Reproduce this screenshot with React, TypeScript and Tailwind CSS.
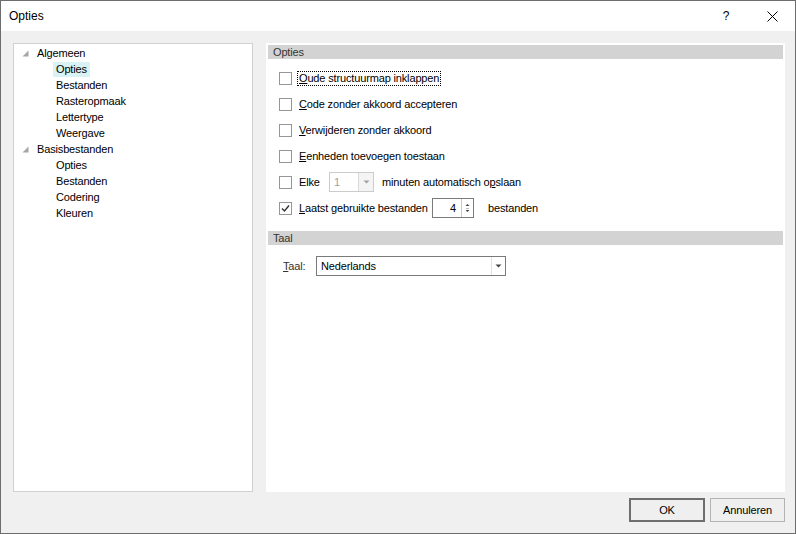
import React from "react";

function Tri() {
  return (
    <svg width="7" height="7" viewBox="0 0 7 7" className="shrink-0">
      <polygon points="6.5,0.5 6.5,6.5 0.5,6.5" fill="#a6a6a6" />
    </svg>
  );
}

function Check({ checked }: { checked?: boolean }) {
  return (
    <div className="w-[13px] h-[13px] border border-[#969696] bg-white shrink-0 flex items-center justify-center">
      {checked && (
        <svg width="9" height="9" viewBox="0 0 9 9">
          <polyline points="1,4.5 3.5,7 8,1.5" fill="none" stroke="#333" strokeWidth="1.4" />
        </svg>
      )}
    </div>
  );
}

function DownArrow({ color = "#444" }: { color?: string }) {
  return (
    <svg width="7" height="4" viewBox="0 0 7 4">
      <polygon points="0.5,0.5 6.5,0.5 3.5,3.5" fill={color} />
    </svg>
  );
}

export default function App() {
  const parentRow = "h-[16px] flex items-center pl-[8px]";
  const childRow = "h-[16px] flex items-center pl-[39px]";
  return (
    <div className="w-[796px] h-[534px] border border-[#6d6d6d] bg-[#f0f0f0] flex flex-col font-['Liberation_Sans',Arial,sans-serif] text-[11px] tracking-[-0.15px] text-black leading-none">
      {/* Title bar */}
      <div className="h-[30px] bg-white flex items-center shrink-0">
        <div className="pl-[8px] text-[12px] tracking-normal flex-1">Opties</div>
        <div className="w-[46px] h-[30px] flex items-center justify-center text-[12px]">?</div>
        <div className="w-[46px] h-[30px] flex items-center justify-center">
          <svg width="11" height="11" viewBox="0 0 11 11">
            <line x1="0.5" y1="0.5" x2="10.5" y2="10.5" stroke="#000" strokeWidth="1" />
            <line x1="10.5" y1="0.5" x2="0.5" y2="10.5" stroke="#000" strokeWidth="1" />
          </svg>
        </div>
      </div>

      {/* Body */}
      <div className="flex pt-[12px] pl-[12px] pr-[10px] gap-[13px] h-[461px] shrink-0">
        {/* Tree */}
        <div className="w-[240px] h-[449px] border border-[#d0d0d0] bg-white pt-[1px]">
          <div className={parentRow}>
            <Tri />
            <span className="ml-[8px]">Algemeen</span>
          </div>
          <div className={childRow}>
            <span className="px-[3px] h-[15px] flex items-center bg-[#d9f2f3]">Opties</span>
          </div>
          <div className={childRow}><span className="px-[3px]">Bestanden</span></div>
          <div className={childRow}><span className="px-[3px]">Rasteropmaak</span></div>
          <div className={childRow}><span className="px-[3px]">Lettertype</span></div>
          <div className={childRow}><span className="px-[3px]">Weergave</span></div>
          <div className={parentRow}>
            <Tri />
            <span className="ml-[8px]">Basisbestanden</span>
          </div>
          <div className={childRow}><span className="px-[3px]">Opties</span></div>
          <div className={childRow}><span className="px-[3px]">Bestanden</span></div>
          <div className={childRow}><span className="px-[3px]">Codering</span></div>
          <div className={childRow}><span className="px-[3px]">Kleuren</span></div>
        </div>

        {/* Right panel */}
        <div className="flex-1 h-[449px] bg-white pt-[2px] px-[2px]">
          <div className="h-[14px] bg-[#d3d3d3] pl-[5px] flex items-center text-[#333]">Opties</div>
          <div className="mt-[6px] pl-[11px]">
            <div className="h-[26px] flex items-center">
              <Check />
              <span className="ml-[5px] border border-dotted border-black px-[1px] h-[15px] flex items-center">
                <span><u>O</u>ude structuurmap inklappen</span>
              </span>
            </div>
            <div className="h-[26px] flex items-center">
              <Check />
              <span className="ml-[7px]"><u>C</u>ode zonder akkoord accepteren</span>
            </div>
            <div className="h-[26px] flex items-center">
              <Check />
              <span className="ml-[7px]"><u>V</u>erwijderen zonder akkoord</span>
            </div>
            <div className="h-[26px] flex items-center">
              <Check />
              <span className="ml-[7px]"><u>E</u>enheden toevoegen toestaan</span>
            </div>
            <div className="h-[26px] flex items-center">
              <Check />
              <span className="ml-[7px] w-[30px]">Elke</span>
              <div className="w-[45px] h-[20px] border border-[#cccccc] bg-white flex items-stretch">
                <div className="flex-1 pl-[4px] flex items-center text-[#a0a0a0]">1</div>
                <div className="w-[15px] border-l border-[#d9d9d9] bg-[#f4f4f4] flex items-center justify-center">
                  <DownArrow color="#a0a0a0" />
                </div>
              </div>
              <span className="ml-[8px]">minuten automatisch o<u>p</u>slaan</span>
            </div>
            <div className="h-[26px] flex items-center">
              <Check checked />
              <span className="ml-[7px] w-[133px]"><u>L</u>aatst gebruikte bestanden</span>
              <div className="w-[42px] h-[20px] border border-[#7a7a7a] bg-white flex items-stretch">
                <div className="flex-1 pr-[5px] flex items-center justify-end">4</div>
                <div className="w-[12px] border-l border-[#c8c8c8] flex flex-col items-center justify-center">
                  <svg width="7" height="14" viewBox="0 0 7 14">
                    <polygon points="3.5,3 5.5,5 1.5,5" fill="#444" />
                    <line x1="2" y1="7.5" x2="5" y2="7.5" stroke="#bbb" strokeWidth="1" />
                    <polygon points="1.5,9 5.5,9 3.5,11" fill="#444" />
                  </svg>
                </div>
              </div>
              <span className="ml-[14px]">bestanden</span>
            </div>
          </div>

          <div className="mt-[10px] h-[14px] bg-[#d3d3d3] pl-[5px] flex items-center text-[#333]">Taal</div>
          <div className="mt-[11px] h-[20px] flex items-center pl-[15px]">
            <span className="w-[33px] text-[#333]"><u>T</u>aal:</span>
            <div className="w-[190px] h-[20px] border border-[#7a7a7a] bg-white flex items-stretch">
              <div className="flex-1 pl-[4px] flex items-center">Nederlands</div>
              <div className="w-[14px] border-l border-[#e0e0e0] flex items-center justify-center">
                <DownArrow />
              </div>
            </div>
          </div>
        </div>
      </div>

      {/* Buttons */}
      <div className="mt-[6px] h-[24px] flex justify-end gap-[5px] pr-[10px] shrink-0">
        <div className="w-[76px] h-[24px] border-2 border-[#6e6e6e] bg-[#efefef] flex items-center justify-center">OK</div>
        <div className="w-[75px] h-[24px] border border-[#b3b3b3] bg-[#efefef] flex items-center justify-center">Annuleren</div>
      </div>
    </div>
  );
}
